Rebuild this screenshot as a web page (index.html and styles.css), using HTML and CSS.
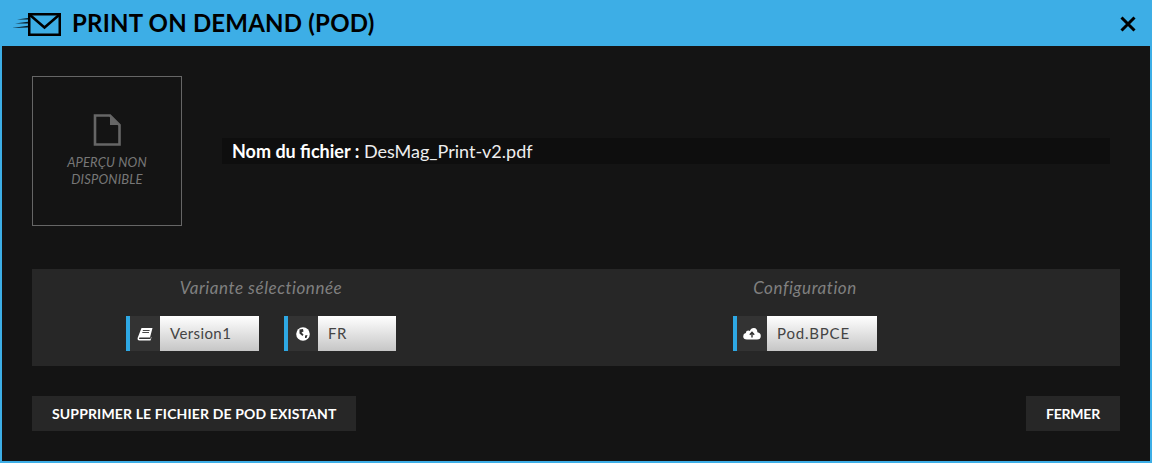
FILE: index.html
```html
<!DOCTYPE html>
<html lang="fr">
<head>
    <meta charset="UTF-8">
    <title>Print on demand (POD)</title>
    <link rel="stylesheet" href="styles.css">
</head>
<body>
    <div class="dialog">
        <div class="dialog-header">
            <svg class="mail-icon" width="50" height="25" viewBox="0 0 50 25">
                <path d="M0 16 L16 13.8 V15.4 Z M3 11.6 L16 9.8 V11.4 Z M5 7.6 L16 6 V7.6 Z" fill="#0b1c26"/>
                <rect x="17.25" y="2.25" width="30.5" height="20.5" fill="none" stroke="#000" stroke-width="2.5"/>
                <path d="M18 3 L32.5 15.5 L47 3" fill="none" stroke="#000" stroke-width="2.5"/>
            </svg>
            <h1>PRINT ON DEMAND (POD)</h1>
            <svg class="close-icon" width="16" height="16" viewBox="0 0 16 16">
                <path d="M1.5 1.5 L14.5 14.5 M14.5 1.5 L1.5 14.5" stroke="#000" stroke-width="3" fill="none"/>
            </svg>
        </div>
        <div class="dialog-body">
            <div class="file-row">
                <div class="preview">
                    <svg width="28" height="32" viewBox="0 0 28 32">
                        <path d="M2 1.5 H17 L26.5 11 V30.5 H2 Z" fill="none" stroke="#666" stroke-width="2.6"/>
                        <path d="M17 1.5 V11 H26.5 Z" fill="#666"/>
                    </svg>
                    <p>APERÇU NON<br>DISPONIBLE</p>
                </div>
                <div class="file-name"><b>Nom du fichier :</b> DesMag_Print-v2.pdf</div>
            </div>
            <div class="settings">
                <div class="settings-col">
                    <h2>Variante sélectionnée</h2>
                    <div class="fields">
                        <div class="field">
                            <span class="field-icon">
                                <svg width="16" height="14" viewBox="0 0 16 14">
                                    <path d="M4.5 1 H15.5 L13 10.5 H3 Q1.8 10.5 2 11.5 Q2.3 12 3.3 12 H13.5 L14 10 L14.5 10.5 L13.5 13.5 H2.5 Q0.3 13.5 0.6 11 Z" fill="#fff"/>
                                    <path d="M5.8 3.5 H12.6 M5.3 5.5 H12" stroke="#333" stroke-width="0.9"/>
                                </svg>
                            </span>
                            <span class="field-value version">Version1</span>
                        </div>
                        <div class="field">
                            <span class="field-icon">
                                <svg width="14" height="14" viewBox="0 0 14 14">
                                    <circle cx="7" cy="7" r="6.8" fill="#fff"/>
                                    <path d="M3.5 2.5 L7 2 L7.5 4.5 L5.5 5.5 L7.5 7.5 L6.5 9 L3.5 6.5 Z M9 8.5 L11.5 8 L10.5 11 L9 11 Z" fill="#333"/>
                                </svg>
                            </span>
                            <span class="field-value lang">FR</span>
                        </div>
                    </div>
                </div>
                <div class="settings-col">
                    <h2>Configuration</h2>
                    <div class="fields">
                        <div class="field">
                            <span class="field-icon">
                                <svg width="18" height="13" viewBox="0 0 18 13">
                                    <path d="M4 12.5 Q0.2 12.5 0.2 9.2 Q0.2 6.6 2.8 6 Q3 3.6 5.4 3.6 Q6.2 3.6 6.8 4 Q8 0.8 11 1 Q14.3 1.3 14.4 5.2 Q17.8 5.8 17.8 9 Q17.8 12.5 14 12.5 Z" fill="#fff"/>
                                    <path d="M9 10.5 V6 M6.8 7.8 L9 5.4 L11.2 7.8" stroke="#333" stroke-width="1.4" fill="none"/>
                                </svg>
                            </span>
                            <span class="field-value config">Pod.BPCE</span>
                        </div>
                    </div>
                </div>
            </div>
            <div class="actions">
                <a href="#" class="button">SUPPRIMER LE FICHIER DE POD EXISTANT</a>
                <a href="#" class="button button-close">FERMER</a>
            </div>
        </div>
    </div>
</body>
</html>
```

FILE: styles.css
```css
html, body {
    margin: 0;
    padding: 0;
    height: 100%;
}
body {
    font-family: "Lato", "Liberation Sans", sans-serif;
    background-color: #141414;
    overflow: hidden;
}
.dialog {
    box-sizing: border-box;
    height: 463px;
    display: flex;
    flex-direction: column;
    background: #141414;
    border: 2px solid #3daee6;
    border-top: 0;
}
.dialog-header {
    flex: none;
    height: 46px;
    margin: 0 -2px;
    padding: 0 16px 0 12px;
    background: #3daee6;
    display: flex;
    align-items: center;
    color: #000;
}
.mail-icon {
    margin: 3px 10px 0 0;
}
.close-icon {
    margin-top: 2px;
}
.dialog-header h1 {
    flex: 1;
    margin: 0;
    font-size: 24px;
    font-weight: 700;
    letter-spacing: 0.2px;
    line-height: 46px;
}
.dialog-body {
    flex: 1;
    padding: 30px 30px 0;
}
.file-row {
    display: flex;
    align-items: center;
    gap: 40px;
    padding-right: 10px;
}
.preview {
    box-sizing: border-box;
    width: 150px;
    height: 150px;
    flex: none;
    border: 1px solid #666;
    padding-top: 37px;
    text-align: center;
    color: #777;
}
.preview svg {
    display: block;
    margin: 0 auto;
}
.preview p {
    margin: 8px 0 0;
    font-size: 13px;
    font-style: italic;
    line-height: 17px;
    letter-spacing: 0.15px;
}
.file-name {
    flex: 1;
    height: 26px;
    line-height: 26px;
    padding-left: 10px;
    background: #0e0e0e;
    color: #eee;
    font-size: 18px;
}
.file-name b {
    color: #fff;
    font-weight: 700;
}
.settings {
    margin-top: 43px;
    height: 97px;
    padding-right: 86px;
    background: #272727;
    display: grid;
    grid-template-columns: 458px 458px;
    gap: 86px;
}
.settings-col h2 {
    margin: 0;
    padding-top: 9px;
    font-size: 17px;
    font-style: italic;
    font-weight: 400;
    line-height: 20px;
    letter-spacing: 0.55px;
    text-align: center;
    color: #808080;
}
.fields {
    margin-top: 18px;
    display: flex;
    justify-content: center;
    gap: 25px;
}
.field {
    display: flex;
    height: 35px;
    border-left: 4px solid #2ea8e4;
}
.field-icon {
    width: 30px;
    background: #333;
    display: flex;
    align-items: center;
    justify-content: center;
}
.field-value {
    padding-left: 10px;
    line-height: 35px;
    font-size: 15px;
    letter-spacing: 0.4px;
    color: #444;
    background: linear-gradient(#fff, #c6c6c6);
}
.version {
    width: 89px;
}
.lang {
    width: 68px;
}
.config {
    width: 100px;
    letter-spacing: 0.8px;
}
.actions {
    margin-top: 30px;
    display: flex;
    justify-content: space-between;
}
.button {
    height: 35px;
    line-height: 35px;
    padding: 0 20px;
    background: #272727;
    color: #fff;
    font-size: 14px;
    font-weight: 700;
    letter-spacing: 0.14px;
    text-decoration: none;
}
.button-close {
    letter-spacing: -0.2px;
}
```
